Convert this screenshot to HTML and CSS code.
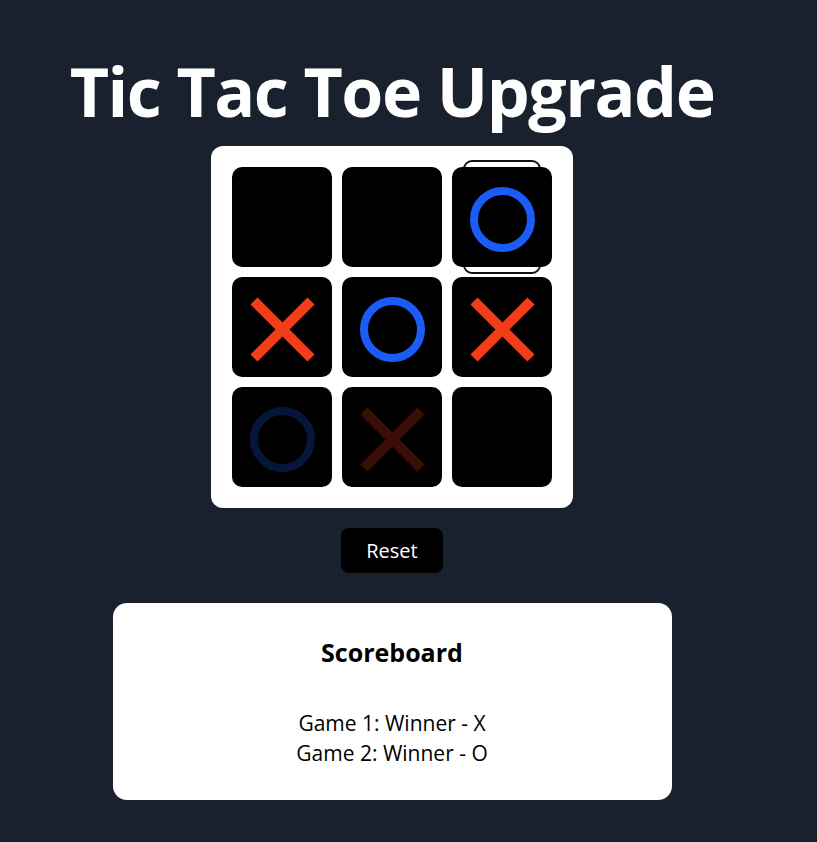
FILE: index.html
```html
<!DOCTYPE html>
<html lang="en">
<head>
<meta charset="utf-8">
<title>Tic Tac Toe Upgrade</title>
<link rel="stylesheet" href="styles.css">
</head>
<body>
<main class="app">
  <h1 class="title">Tic Tac Toe Upgrade</h1>
  <div class="board">
    <div class="cell"></div>
    <div class="cell"></div>
    <div class="cell active">
      <svg class="mark" viewBox="0 0 65 65" width="65" height="65"><circle class="o" cx="32.5" cy="32.5" r="28.5"/></svg>
    </div>
    <div class="cell">
      <svg class="mark" viewBox="0 0 65 65" width="65" height="65"><path class="x" d="M4 4L61 61M61 4L4 61"/></svg>
    </div>
    <div class="cell">
      <svg class="mark" viewBox="0 0 65 65" width="65" height="65"><circle class="o" cx="32.5" cy="32.5" r="28.5"/></svg>
    </div>
    <div class="cell">
      <svg class="mark" viewBox="0 0 65 65" width="65" height="65"><path class="x" d="M4 4L61 61M61 4L4 61"/></svg>
    </div>
    <div class="cell">
      <svg class="mark faded" viewBox="0 0 65 65" width="65" height="65"><circle class="o" cx="32.5" cy="32.5" r="28.5"/></svg>
    </div>
    <div class="cell">
      <svg class="mark faded" viewBox="0 0 65 65" width="65" height="65"><path class="x" d="M4 4L61 61M61 4L4 61"/></svg>
    </div>
    <div class="cell"></div>
  </div>
  <button class="reset" type="button">Reset</button>
  <section class="scoreboard">
    <h2 class="score-title">Scoreboard</h2>
    <ul class="score-list">
      <li>Game 1: Winner - X</li>
      <li>Game 2: Winner - O</li>
    </ul>
  </section>
</main>
</body>
</html>
```
FILE: styles.css
```css
html, body {
  margin: 0;
  padding: 0;
  background: #19212e;
}

body {
  font-family: "Open Sans", "Noto Sans", sans-serif;
  color: #000;
}

.app {
  width: 784px;
  display: flex;
  flex-direction: column;
  align-items: center;
}

.title {
  margin: 48px 0 12px;
  font-size: 68px;
  line-height: 86px;
  letter-spacing: -1.5px;
  font-weight: 700;
  color: #fff;
  white-space: nowrap;
}

.board {
  isolation: isolate;
  display: grid;
  grid-template-columns: repeat(3, 100px);
  grid-auto-rows: 100px;
  gap: 10px;
  padding: 21px;
  background: #fff;
  border-radius: 12px;
}

.cell {
  position: relative;
  background: #000;
  border-radius: 10px;
  display: flex;
  align-items: center;
  justify-content: center;
}

.cell.active::before {
  content: "";
  position: absolute;
  left: 11px;
  right: 11px;
  top: -7px;
  bottom: -7px;
  border: 2px solid #111;
  border-radius: 9px;
  background: #fff;
  z-index: -1;
}

.mark {
  display: block;
  margin-top: 5px;
}

.mark .o {
  fill: none;
  stroke: #1c5cf6;
  stroke-width: 8;
}

.mark .x {
  fill: none;
  stroke: #f33c18;
  stroke-width: 10;
}

.mark.faded {
  opacity: 0.24;
}

.reset {
  margin-top: 20px;
  width: 102px;
  height: 45px;
  border: 0;
  border-radius: 8px;
  background: #000;
  color: #fff;
  font-family: inherit;
  font-size: 20px;
  padding: 0;
}

.scoreboard {
  margin-top: 30px;
  width: 559px;
  background: #fff;
  border-radius: 14px;
  text-align: center;
  padding: 33px 0 32px;
}

.score-title {
  margin: 0;
  font-size: 25px;
  line-height: 32px;
  font-weight: 700;
}

.score-list {
  list-style: none;
  margin: 40px 0 0;
  padding: 0;
  font-size: 21px;
  line-height: 30px;
}
```
